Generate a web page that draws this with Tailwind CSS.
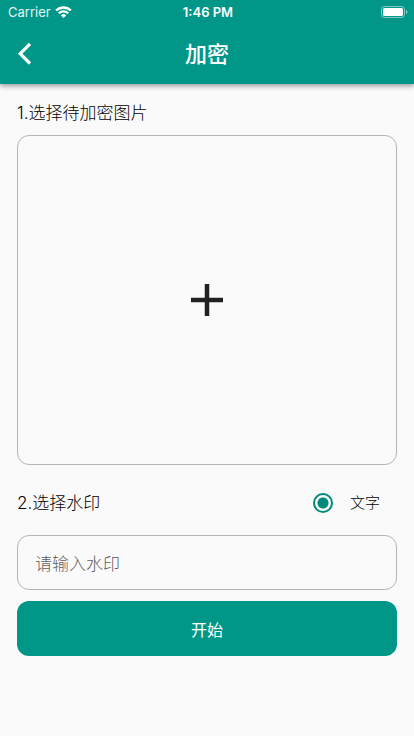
<!DOCTYPE html>
<html lang="zh-CN">
<head>
<meta charset="utf-8">
<meta name="viewport" content="width=device-width, initial-scale=1">
<title>加密</title>
<script src="https://cdn.jsdelivr.net/npm/@tailwindcss/browser@4"></script>
</head>
<body class="min-h-screen bg-[#fafafa] font-['Inter','Noto_Sans_CJK_SC',sans-serif] text-black antialiased">
<header class="bg-[#009688] text-white shadow-[0_2px_5px_rgba(0,0,0,0.4)]">
  <div class="grid h-6 grid-cols-3 items-center pl-2 pr-1.5 text-[13px] leading-6">
    <div class="flex items-center gap-1 text-white/90">
      <span>Carrier</span>
      <svg class="h-3 w-[17px]" viewBox="0 0 17 12" fill="none" stroke="#fff" stroke-width="2.300" aria-hidden="true">
        <path d="M1.100 4.500a10.600 10.600 0 0 1 14.800 0"/>
        <path d="M3.800 7.300a6.700 6.700 0 0 1 9.400 0"/>
        <path d="M8.500 12 5.900 9.400a3.700 3.700 0 0 1 5.200 0z" fill="#fff" stroke="none"/>
      </svg>
    </div>
    <span class="text-center font-semibold">1:46 PM</span>
    <svg class="h-3 w-[27px] justify-self-end" viewBox="0 0 27 12" aria-hidden="true">
      <rect x=".5" y=".5" width="23" height="11" rx="3" fill="none" stroke="#fff" stroke-opacity=".5"/>
      <rect x="2" y="2" width="20" height="8" rx="1.5" fill="#fff"/>
      <path d="M25 4v4c.9-.4 1.5-1.100 1.500-2S25.900 4.400 25 4z" fill="#fff" fill-opacity=".5"/>
    </svg>
  </div>
  <div class="grid h-[60px] grid-cols-[56px_1fr_56px] items-center">
    <button type="button" aria-label="返回" class="flex h-12 items-center pl-[17px]">
      <svg class="h-6 w-4" viewBox="0 0 16 24" fill="none" stroke="#fff" stroke-width="3.200" aria-hidden="true"><path d="M13 1.900 3.200 11.700l9.800 9.800"/></svg>
    </button>
    <h1 class="text-center text-[22px] font-medium leading-8">加密</h1>
  </div>
</header>
<main class="px-[17px] pt-[17px]">
  <h2 class="text-[17px] font-light leading-6">1.选择待加密图片</h2>
  <button type="button" aria-label="选择待加密图片" class="mt-2.5 flex h-[330px] w-full items-center justify-center rounded-xl border border-[#b5b5b5]">
    <svg class="size-8" viewBox="0 0 32 32" fill="none" stroke="#212121" stroke-width="4.500" aria-hidden="true"><path d="M16 0v32M0 16h32"/></svg>
  </button>
  <div class="flex h-[70px] items-center justify-between pt-1.5">
    <h2 class="text-[17px] font-light leading-6">2.选择水印</h2>
    <label class="flex items-center gap-[17px] pr-[17px] text-[15px] font-light leading-6">
      <input type="radio" name="watermark" checked class="size-5 appearance-none rounded-full border-2 border-[#00897b] bg-[radial-gradient(circle,#00897b_5px,transparent_6px)]">
      文字
    </label>
  </div>
  <input type="text" aria-label="水印" placeholder="请输入水印" class="block h-[55px] w-full rounded-xl border border-[#b5b5b5] px-[17px] pt-0.5 text-[17px] font-light placeholder:text-[#5f5f5f]">
  <button type="button" class="mt-[11px] h-[55px] w-full rounded-xl bg-[#009688] pt-0.5 text-[16px] text-white">开始</button>
</main>
</body>
</html>
